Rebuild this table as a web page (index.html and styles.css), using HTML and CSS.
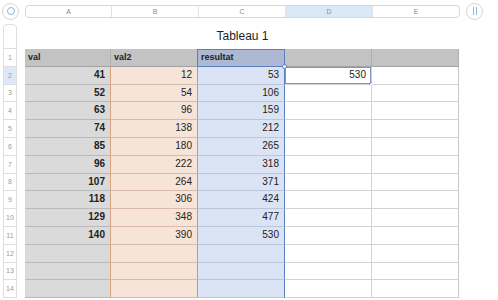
FILE: index.html
```html
<!DOCTYPE html>
<html lang="fr">
<head>
<meta charset="utf-8">
<title>Tableau 1</title>
<link rel="stylesheet" href="styles.css">
</head>
<body>
<div class="topbar">
  <div class="roundbtn left"><span class="dot"></span></div>
  <div class="colbar">
    <div class="colh">A</div>
    <div class="colh">B</div>
    <div class="colh">C</div>
    <div class="colh sel">D</div>
    <div class="colh last">E</div>
  </div>
  <div class="roundbtn right"><span class="bars"></span></div>
</div>
<div class="main">
  <div class="rowheads">
    <div class="rh top"></div>
    <div class="rh">1</div>
    <div class="rh sel">2</div>
    <div class="rh">3</div>
    <div class="rh">4</div>
    <div class="rh">5</div>
    <div class="rh">6</div>
    <div class="rh">7</div>
    <div class="rh">8</div>
    <div class="rh">9</div>
    <div class="rh">10</div>
    <div class="rh">11</div>
    <div class="rh">12</div>
    <div class="rh">13</div>
    <div class="rh">14</div>
  </div>
  <div class="sheet">
    <div class="title">Tableau 1</div>
    <div class="grid">
      <div class="c hd a">val</div><div class="c hd b">val2</div><div class="c hd cc">resultat</div><div class="c hd d"></div><div class="c hd e"></div>

      <div class="c a">41</div><div class="c b">12</div><div class="c cc">53</div><div class="c d active">530<span class="handle tl"></span><span class="handle br"></span></div><div class="c e"></div>
      <div class="c a">52</div><div class="c b">54</div><div class="c cc">106</div><div class="c d"></div><div class="c e"></div>
      <div class="c a">63</div><div class="c b">96</div><div class="c cc">159</div><div class="c d"></div><div class="c e"></div>
      <div class="c a">74</div><div class="c b">138</div><div class="c cc">212</div><div class="c d"></div><div class="c e"></div>
      <div class="c a">85</div><div class="c b">180</div><div class="c cc">265</div><div class="c d"></div><div class="c e"></div>
      <div class="c a">96</div><div class="c b">222</div><div class="c cc">318</div><div class="c d"></div><div class="c e"></div>
      <div class="c a">107</div><div class="c b">264</div><div class="c cc">371</div><div class="c d"></div><div class="c e"></div>
      <div class="c a">118</div><div class="c b">306</div><div class="c cc">424</div><div class="c d"></div><div class="c e"></div>
      <div class="c a">129</div><div class="c b">348</div><div class="c cc">477</div><div class="c d"></div><div class="c e"></div>
      <div class="c a">140</div><div class="c b">390</div><div class="c cc">530</div><div class="c d"></div><div class="c e"></div>
      <div class="c a"></div><div class="c b"></div><div class="c cc"></div><div class="c d"></div><div class="c e"></div>
      <div class="c a"></div><div class="c b"></div><div class="c cc"></div><div class="c d"></div><div class="c e"></div>
      <div class="c a"></div><div class="c b"></div><div class="c cc"></div><div class="c d"></div><div class="c e"></div>
    </div>
  </div>
</div>
</body>
</html>
```

FILE: styles.css
```css
html, body {
  margin: 0;
  padding: 0;
  background: #ffffff;
}
body {
  width: 498px;
  height: 300px;
  overflow: hidden;
  font-family: "Liberation Sans", Arial, sans-serif;
  color: #222;
}

.topbar {
  display: flex;
  align-items: center;
  height: 22px;
}
.roundbtn {
  width: 17px;
  height: 17px;
  box-sizing: border-box;
  border: 1px solid #d4d4d4;
  border-radius: 50%;
  display: flex;
  align-items: center;
  justify-content: center;
  background: #fff;
}
.roundbtn.left {
  margin-left: 2px;
}
.roundbtn.right {
  margin-left: 6px;
}
.dot {
  width: 8px;
  height: 8px;
  box-sizing: border-box;
  border: 1.5px solid #8db3e0;
  border-radius: 50%;
}
.bars {
  width: 4px;
  height: 8px;
  box-sizing: border-box;
  border-left: 1px solid #8db3e0;
  border-right: 1px solid #8db3e0;
}
.colbar {
  margin-left: 6px;
  width: 435px;
  height: 13px;
  box-sizing: border-box;
  border: 1px solid #d6d6d6;
  border-radius: 4px;
  display: grid;
  grid-template-columns: 86px 87px 87px 87px 1fr;
  overflow: hidden;
}
.colh {
  font-size: 7px;
  color: #8a8a8a;
  display: flex;
  align-items: center;
  justify-content: center;
  border-right: 1px solid #e2e2e2;
}
.colh.sel {
  background: #dbe8f8;
}
.colh.last {
  border-right: none;
}

.main {
  display: flex;
  margin-top: 2px;
}
.rowheads {
  margin-left: 3px;
  width: 14px;
  display: flex;
  flex-direction: column;
}
.rh {
  height: 17.8px;
  box-sizing: border-box;
  border: 1px solid #dedede;
  border-top: none;
  font-size: 7px;
  color: #9a9a9a;
  display: flex;
  align-items: center;
  justify-content: center;
}
.rh.top {
  height: 25px;
  border-top: 1px solid #dedede;
  border-radius: 4px 4px 0 0;
}
.rh.sel {
  background: #dde9f7;
}

.sheet {
  margin-left: 8px;
  width: 435px;
}
.title {
  height: 25px;
  line-height: 25px;
  text-align: center;
  font-size: 12px;
  color: #1e1e1e;
}
.grid {
  display: grid;
  grid-template-columns: 86px 87px 87px 87px 87px;
  grid-auto-rows: 17.8px;
}
.c {
  position: relative;
  box-sizing: border-box;
  border-right: 1px solid #d2d2d2;
  border-bottom: 1px solid #d2d2d2;
  font-size: 10px;
  text-align: right;
  padding-right: 5px;
  line-height: 16px;
  color: #222;
}
.c.a {
  background: #dadada;
  border-right-color: #d9a27a;
  border-bottom-color: #b9b9b9;
  font-weight: bold;
}
.c.b {
  background: #f7e4d8;
  border-right-color: #c99874;
  border-bottom-color: #d8bba8;
}
.c.cc {
  background: #dbe4f5;
  border-right: 1px solid #5a7fbf;
  border-bottom-color: #bac6dd;
}
.c.d, .c.e {
  background: #ffffff;
}
.c.e {
  border-right-color: #c8c8c8;
}

.c.hd {
  background: #c3c3c3;
  border-bottom: 1px solid #a3a3a3;
  font-weight: bold;
  font-size: 9px;
  text-align: left;
  padding-left: 3px;
  line-height: 17px;
  border-right-color: #b0b0b0;
}
.c.hd.a {
  border-right-color: #b0b0b0;
}
.c.hd.b {
  border-right-color: #5a7fbf;
}
.c.hd.cc {
  background: #aeb8d3;
  border-right: 1px solid #5a7fbf;
  box-shadow: inset 0 1px 0 #5a7fbf;
  border-bottom-color: #5a7fbf;
}
.c.hd.e {
  border-right-color: #b0b0b0;
}

.c.active {
  box-shadow: inset 0 0 0 1px #7898cc;
}
.handle {
  position: absolute;
  width: 5px;
  height: 5px;
  box-sizing: border-box;
  border: 1px solid #5a7fbf;
  border-radius: 50%;
  background: #fff;
}
.handle.tl {
  left: -3px;
  top: -3px;
}
.handle.br {
  right: -3px;
  bottom: -3px;
}
```
